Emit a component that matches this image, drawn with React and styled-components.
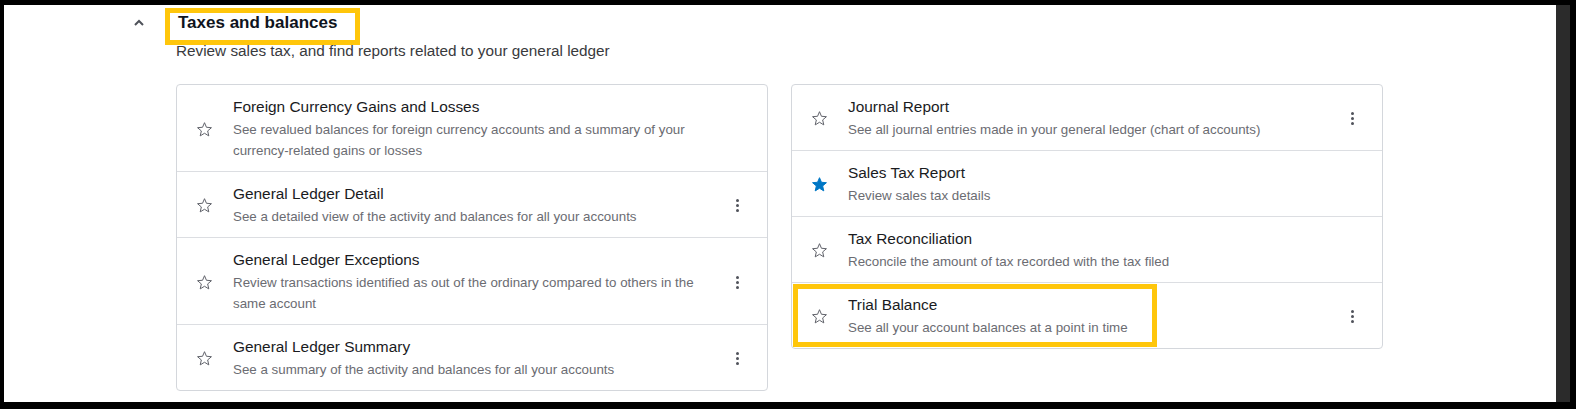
import React from "react";
import styled, { createGlobalStyle } from "styled-components";

const GlobalStyle = createGlobalStyle`
  html, body { margin: 0; padding: 0; height: 100%; background: #000; }
  #root { height: 100%; }
  * { box-sizing: border-box; }
`;

const Frame = styled.div`
  height: 409px;
  padding: 5px 6px 7px 4px;
  background: #000;
  display: flex;
  font-family: "Liberation Sans", Arial, sans-serif;
`;

const Viewport = styled.main`
  flex: 1;
  background: #fff;
  overflow: hidden;
`;

const ScrollStrip = styled.div`
  width: 14px;
  background: #2b2b2b;
`;

const Section = styled.section`
  display: grid;
  grid-template-columns: 52px 1207px;
  padding: 8px 0 0 120px;
`;

const ToggleCell = styled.div`
  height: 20px;
  display: flex;
  align-items: center;
  padding-left: 9px;
  color: #4f525a;
`;

const Main = styled.div`
  display: flex;
  flex-direction: column;
`;

const Title = styled.h2`
  position: relative;
  align-self: flex-start;
  margin: 0 0 0 2px;
  font-size: 17px;
  line-height: 20px;
  font-weight: 700;
  color: #0f1420;
`;

const Highlight = styled.span`
  position: absolute;
  border: 5px solid #ffc60b;
  pointer-events: none;
`;

const Subtitle = styled.p`
  margin: 8px 0 0 0;
  font-size: 15.3px;
  line-height: 20px;
  color: #393a3d;
`;

const Columns = styled.div`
  display: grid;
  grid-template-columns: 1fr 1fr;
  gap: 23px;
  margin-top: 23px;
  align-items: start;
`;

const Card = styled.div`
  border: 1px solid #d4d7dc;
  border-radius: 4px;
  background: #fff;
`;

const Row = styled.div`
  position: relative;
  display: flex;
  align-items: center;
  padding: 12px 18px 10px 19px;
  & + & { border-top: 1px solid #dcdee2; }
`;

const StarBox = styled.span`
  width: 17px;
  height: 17px;
  flex: none;
  display: flex;
  margin-right: 20px;
`;

const Text = styled.div`
  flex: 1;
  margin-right: 12px;
  min-width: 0;
`;

const RowTitle = styled.div`
  font-size: 15.4px;
  line-height: 20px;
  color: #1a1b1e;
`;

const RowDesc = styled.div`
  margin-top: 2px;
  font-size: 13.35px;
  line-height: 21px;
  color: #6b6c72;
`;

const Kebab = styled.button`
  width: 24px;
  height: 24px;
  flex: none;
  border: 0;
  padding: 0;
  background: transparent;
  display: flex;
  flex-direction: column;
  align-items: center;
  justify-content: center;
  gap: 2px;
  visibility: ${(p) => (p.$shown ? "visible" : "hidden")};
  span {
    width: 3px;
    height: 3px;
    border-radius: 50%;
    background: #50535b;
  }
`;

const Chevron = () => (
  <svg width="12" height="12" viewBox="0 0 12 12">
    <polyline points="2,8 6,4 10,8" fill="none" stroke="currentColor" strokeWidth="2" />
  </svg>
);

const Star = ({ filled }) => (
  <svg width="17" height="17" viewBox="0 0 24 24">
    <polygon
      points="12,2.4 14.75,8.85 21.8,9.45 16.45,14.05 18.05,21 12,17.3 5.95,21 7.55,14.05 2.2,9.45 9.25,8.85"
      fill={filled ? "#0077c5" : "none"}
      stroke={filled ? "#0077c5" : "#5f6169"}
      strokeWidth="1.4"
      strokeLinejoin="miter"
    />
  </svg>
);

const left = [
  {
    t: "Foreign Currency Gains and Losses",
    d: "See revalued balances for foreign currency accounts and a summary of your currency-related gains or losses",
    k: false,
  },
  {
    t: "General Ledger Detail",
    d: "See a detailed view of the activity and balances for all your accounts",
    k: true,
  },
  {
    t: "General Ledger Exceptions",
    d: "Review transactions identified as out of the ordinary compared to others in the same account",
    k: true,
  },
  {
    t: "General Ledger Summary",
    d: "See a summary of the activity and balances for all your accounts",
    k: true,
  },
];

const right = [
  {
    t: "Journal Report",
    d: "See all journal entries made in your general ledger (chart of accounts)",
    k: true,
  },
  { t: "Sales Tax Report", d: "Review sales tax details", k: false, f: true },
  {
    t: "Tax Reconciliation",
    d: "Reconcile the amount of tax recorded with the tax filed",
    k: false,
  },
  {
    t: "Trial Balance",
    d: "See all your account balances at a point in time",
    k: true,
    h: true,
  },
];

const ReportRow = ({ item }) => (
  <Row>
    <StarBox>
      <Star filled={item.f} />
    </StarBox>
    <Text>
      <RowTitle>{item.t}</RowTitle>
      <RowDesc>{item.d}</RowDesc>
    </Text>
    <Kebab $shown={item.k} aria-label="More">
      <span />
      <span />
      <span />
    </Kebab>
    {item.h && <Highlight style={{ left: 1, top: 1, width: 364, height: 63 }} />}
  </Row>
);

export default function App() {
  return (
    <>
      <GlobalStyle />
      <Frame>
        <Viewport>
          <Section>
            <ToggleCell>
              <Chevron />
            </ToggleCell>
            <Main>
              <Title>
                Taxes and balances
                <Highlight style={{ left: -13, right: -23, top: -5, bottom: -12 }} />
              </Title>
              <Subtitle>Review sales tax, and find reports related to your general ledger</Subtitle>
              <Columns>
                <Card>
                  {left.map((it) => (
                    <ReportRow key={it.t} item={it} />
                  ))}
                </Card>
                <Card>
                  {right.map((it) => (
                    <ReportRow key={it.t} item={it} />
                  ))}
                </Card>
              </Columns>
            </Main>
          </Section>
        </Viewport>
        <ScrollStrip />
      </Frame>
    </>
  );
}
